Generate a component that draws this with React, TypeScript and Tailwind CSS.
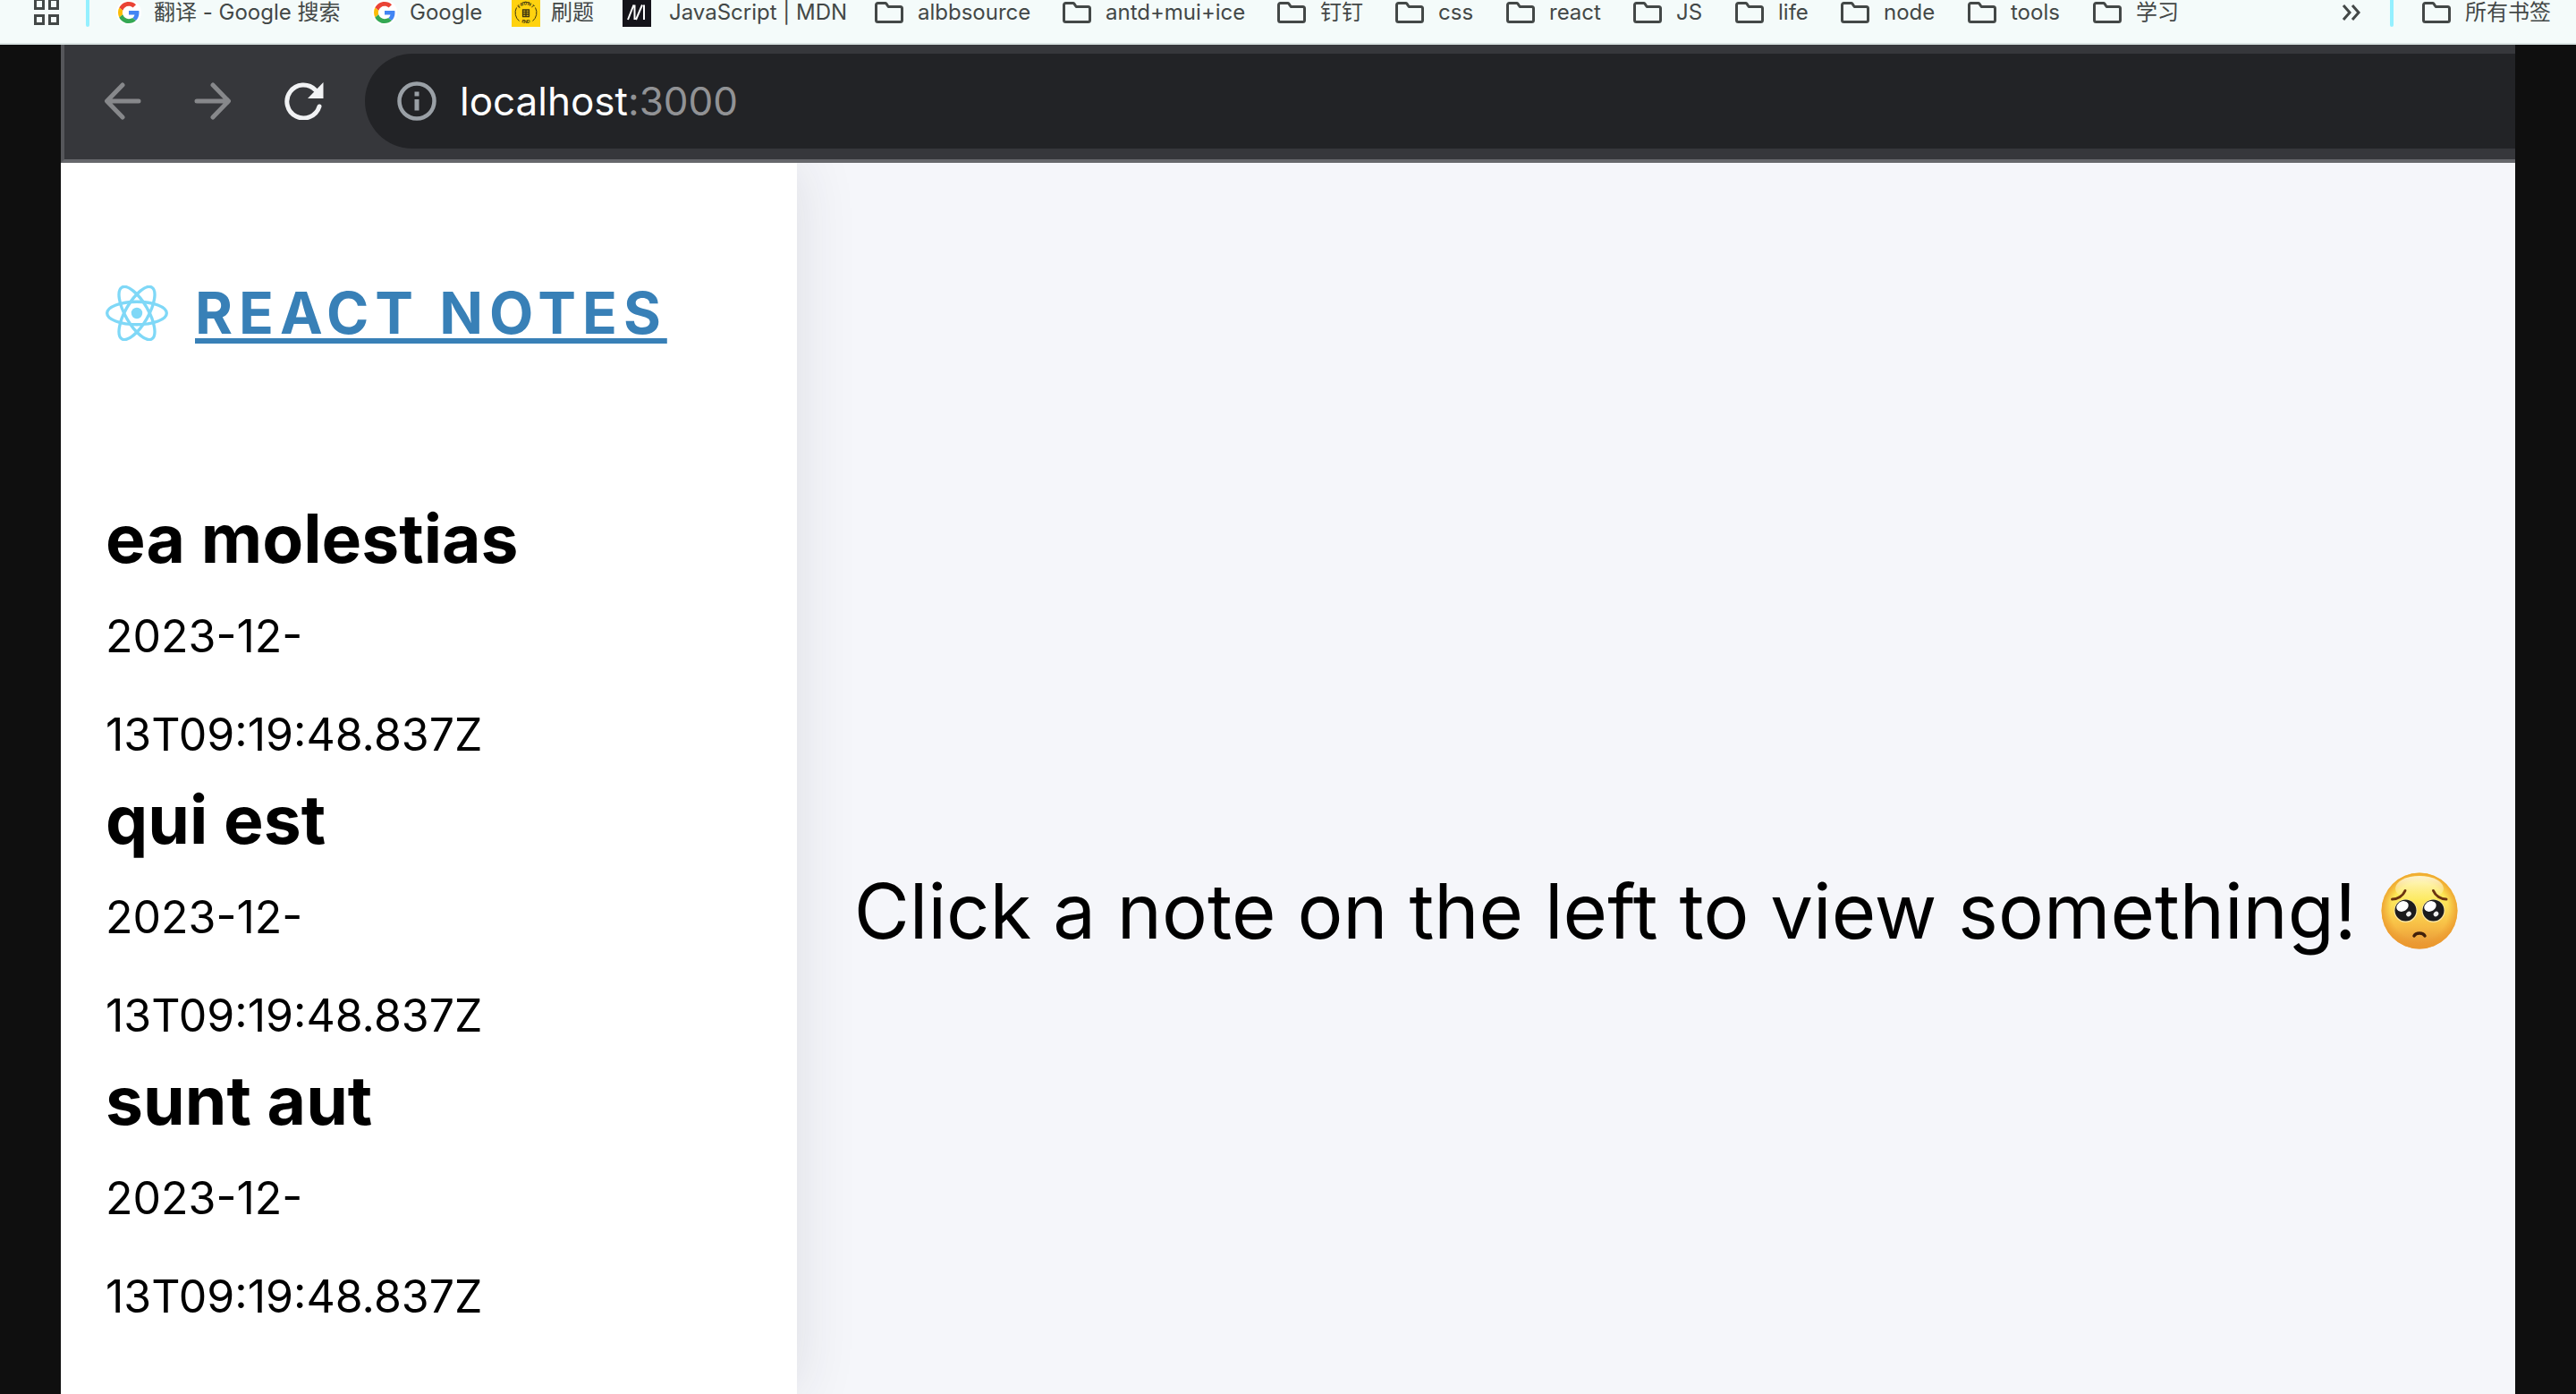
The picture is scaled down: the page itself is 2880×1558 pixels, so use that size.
import type { ReactNode } from "react";

const FolderIcon = () => (
  <svg viewBox="0 0 32 24" className="h-6 w-8 shrink-0" fill="none" stroke="#434847" strokeWidth="3" strokeLinejoin="round" aria-hidden="true">
    <path d="M1.5 3.5a2 2 0 0 1 2-2h8.2a1.500 1.500 0 0 1 1.200.6L15.200 5.500H28.500a2 2 0 0 1 2 2V20.500a2 2 0 0 1-2 2H3.500a2 2 0 0 1-2-2z" />
  </svg>
);

const GoogleIcon = () => (
  <span className="flex size-7 shrink-0 items-center justify-center rounded-full bg-white">
    <svg viewBox="0 0 48 48" className="size-6" aria-hidden="true">
      <path fill="#EA4335" d="M24 9.500c3.540 0 6.710 1.220 9.210 3.600l6.850-6.850C35.900 2.380 30.470 0 24 0 14.620 0 6.510 5.380 2.560 13.220l7.980 6.190C12.430 13.720 17.740 9.500 24 9.500z" />
      <path fill="#4285F4" d="M46.980 24.550c0-1.570-.15-3.090-.38-4.550H24v9.020h12.940c-.58 2.960-2.260 5.480-4.780 7.180l7.730 6c4.510-4.180 7.090-10.360 7.090-17.650z" />
      <path fill="#FBBC05" d="M10.530 28.590c-.48-1.450-.76-2.990-.76-4.590s.27-3.140.76-4.590l-7.980-6.190C.92 16.460 0 20.120 0 24c0 3.880.92 7.540 2.560 10.780l7.970-6.190z" />
      <path fill="#34A853" d="M24 48c6.480 0 11.930-2.130 15.890-5.810l-7.730-6c-2.150 1.450-4.920 2.300-8.160 2.300-6.260 0-11.570-4.220-13.470-9.910l-7.980 6.190C6.510 42.620 14.620 48 24 48z" />
    </svg>
  </span>
);

const QuizIcon = () => (
  <svg viewBox="0 0 32 32" className="size-8 shrink-0" aria-hidden="true">
    <defs>
      <path id="badge-top" d="M7.500 16a8.500 8.500 0 0 1 17 0" />
      <path id="badge-bottom" d="M4 16a12 12 0 0 0 24 0" />
    </defs>
    <rect width="32" height="32" fill="#ffd20f" />
    <path d="M5.500 10.500a12 12 0 0 0 3 15M26.500 10.500a12 12 0 0 1-3 15M12 5a12 12 0 0 1 8 0" fill="none" stroke="#3d3510" strokeWidth="1" />
    <g fill="#3d3510" fontSize="5" fontWeight="700" textAnchor="middle">
      <text>
        <textPath href="#badge-top" startOffset="50%">FRONT</textPath>
      </text>
      <text>
        <textPath href="#badge-bottom" startOffset="50%">END</textPath>
      </text>
    </g>
    <path d="M12 13h8M12 15.500h8M12 18h8M12 20.500h8M12.500 12.500v8M16 12.500v8M19.500 12.500v8" stroke="#3d3510" strokeWidth="1.300" fill="none" />
  </svg>
);

const MdnIcon = () => (
  <svg viewBox="0 0 32 32" className="size-8 shrink-0" aria-hidden="true">
    <rect width="32" height="32" fill="#15141a" />
    <path d="M6 24 12.500 7.500M15 24 22 7.500M13.500 7.500V24M24 7.500V24" stroke="#fff" strokeWidth="2" fill="none" />
  </svg>
);

type Bookmark = { label: string; icon: ReactNode; width: string; gap?: string };

const bookmarks: Bookmark[] = [
  { label: "翻译 - Google 搜索", icon: <GoogleIcon />, width: "w-[286px]", gap: "gap-3.5" },
  { label: "Google", icon: <GoogleIcon />, width: "w-[156px]", gap: "gap-3.5" },
  { label: "刷题", icon: <QuizIcon />, width: "w-[124px]", gap: "gap-3" },
  { label: "JavaScript | MDN", icon: <MdnIcon />, width: "w-[282px]", gap: "gap-5" },
  { label: "albbsource", icon: <FolderIcon />, width: "w-[210px]" },
  { label: "antd+mui+ice", icon: <FolderIcon />, width: "w-[240px]" },
  { label: "钉钉", icon: <FolderIcon />, width: "w-[132px]" },
  { label: "css", icon: <FolderIcon />, width: "w-[124px]" },
  { label: "react", icon: <FolderIcon />, width: "w-[142px]" },
  { label: "JS", icon: <FolderIcon />, width: "w-[114px]" },
  { label: "life", icon: <FolderIcon />, width: "w-[118px]" },
  { label: "node", icon: <FolderIcon />, width: "w-[142px]" },
  { label: "tools", icon: <FolderIcon />, width: "w-[140px]" },
  { label: "学习", icon: <FolderIcon />, width: "w-[132px]" },
];

const BookmarkBar = () => (
  <nav aria-label="书签" className="flex h-[50px] items-start overflow-hidden border-b-2 border-[#dbe5e4] bg-[#f4fbfa] pr-7 pl-[38px] text-2xl leading-7 text-[#434847]">
    <button type="button" aria-label="Apps" className="h-7 shrink-0">
      <svg viewBox="0 0 28 28" className="size-7" fill="none" stroke="#434847" strokeWidth="3" aria-hidden="true">
        <path d="M1.500-.5h9v10h-9zM17.500-.5h9v10h-9zM1.500 17.500h9v9h-9zM17.500 17.500h9v9h-9z" />
      </svg>
    </button>
    <span className="mr-[30px] ml-[30px] h-[30px] w-1 shrink-0 rounded-b bg-[#94f0ff]" />
    {bookmarks.map((b) => (
      <a key={b.label} href="#" className={`flex h-7 shrink-0 items-center whitespace-nowrap ${b.gap ?? "gap-4"} ${b.width}`}>
        {b.icon}
        <span>{b.label}</span>
      </a>
    ))}
    <button type="button" aria-label="More bookmarks" className="ml-auto h-7 shrink-0">
      <svg viewBox="0 0 22 28" className="h-7 w-[22px]" fill="none" stroke="#434847" strokeWidth="3" aria-hidden="true">
        <path d="M2 6l7 8-7 8M12 6l7 8-7 8" />
      </svg>
    </button>
    <span className="mr-8 ml-8 h-[30px] w-1 shrink-0 rounded-b bg-[#94f0ff]" />
    <a href="#" className="flex h-7 shrink-0 items-center gap-4 whitespace-nowrap">
      <FolderIcon />
      <span>所有书签</span>
    </a>
  </nav>
);

const Toolbar = () => (
  <header className="flex h-[132px] items-start border-b-4 border-l-4 border-b-[#66676b] border-l-[#55565a] bg-[#36373b] pt-[10px]">
    <div className="flex h-[106px] w-[336px] shrink-0 items-center gap-[59px] pl-11">
      <button type="button" aria-label="Back">
        <svg viewBox="0 0 42 42" className="size-[42px]" fill="none" stroke="#87888b" strokeWidth="5" strokeLinecap="round" strokeLinejoin="round" aria-hidden="true">
          <path d="M39 21H4M21 3 3.500 21l17.500 18" />
        </svg>
      </button>
      <button type="button" aria-label="Forward">
        <svg viewBox="0 0 42 42" className="size-[42px]" fill="none" stroke="#87888b" strokeWidth="5" strokeLinecap="round" strokeLinejoin="round" aria-hidden="true">
          <path d="M3 21h35M21 3l17.500 18-17.500 18" />
        </svg>
      </button>
      <button type="button" aria-label="Reload">
        <svg viewBox="0 0 44 42" className="h-[42px] w-11" fill="none" strokeLinecap="round" aria-hidden="true">
          <path d="M39 27A18.500 18.500 0 1 1 34.500 8.500" stroke="#f1f2f4" strokeWidth="5" />
          <path d="M43.500 0v18H26z" fill="#f1f2f4" />
        </svg>
      </button>
    </div>
    <button type="button" className="flex h-[106px] grow items-center gap-[26px] rounded-l-full bg-[#222326] pl-9 text-left text-[44px] leading-none text-[#919295]">
      <svg viewBox="0 0 44 44" className="size-11" fill="none" stroke="#9aa0a6" strokeWidth="5" aria-hidden="true">
        <circle cx="22" cy="22" r="19.500" strokeWidth="4.500" />
        <path d="M22 20v12.500M22 11.500v5" />
      </svg>
      <span>
        <span className="text-white">localhost</span>:3000
      </span>
    </button>
  </header>
);

const ReactLogo = () => (
  <svg viewBox="-11.500 -10.232 23 20.463" className="h-[62px] w-[70px] shrink-0" aria-hidden="true">
    <circle r="2.050" fill="#7fd8f7" />
    <g stroke="#7fd8f7" strokeWidth="1.100" fill="none">
      <ellipse rx="11" ry="4.200" />
      <ellipse rx="11" ry="4.200" transform="rotate(60)" />
      <ellipse rx="11" ry="4.200" transform="rotate(120)" />
    </g>
  </svg>
);

const PleadingFace = () => (
  <svg viewBox="0 0 86 86" className="size-[86px] shrink-0" role="img" aria-label="pleading face">
    <defs>
      <linearGradient id="face" x1="0" y1="0" x2="0" y2="1">
        <stop offset="0" stopColor="#fde23c" />
        <stop offset=".35" stopColor="#fde95c" />
        <stop offset=".7" stopColor="#f7bd45" />
        <stop offset="1" stopColor="#e58f34" />
      </linearGradient>
      <radialGradient id="rim" cx=".5" cy=".5" r=".5">
        <stop offset=".75" stopColor="#ec9a2d" stopOpacity="0" />
        <stop offset="1" stopColor="#ec9a2d" stopOpacity=".85" />
      </radialGradient>
      <linearGradient id="shine" x1="0" y1="0" x2="0" y2="1">
        <stop offset="0" stopColor="#fffbe0" stopOpacity=".9" />
        <stop offset="1" stopColor="#fffbe0" stopOpacity="0" />
      </linearGradient>
    </defs>
    <circle cx="43" cy="43" r="42.500" fill="url(#face)" />
    <circle cx="43" cy="43" r="42.500" fill="url(#rim)" />
    <ellipse cx="43" cy="18" rx="27" ry="14" fill="url(#shine)" />
    <g fill="none" stroke="#6b3410" strokeWidth="3" strokeLinecap="round">
      <path d="M12.500 30c6 0 12-3.500 14.500-9.500M73 30c-6 0-12-3.500-14.500-9.500" />
      <path d="M37 71c2-4 10-4 12 0" stroke="#41200c" strokeWidth="3.500" />
    </g>
    <g>
      <circle cx="27.500" cy="43" r="13" fill="#fff3c4" opacity=".7" />
      <circle cx="58.500" cy="43" r="13" fill="#fff3c4" opacity=".7" />
      <circle cx="27.500" cy="42.500" r="12" fill="#1b1b1d" />
      <circle cx="58.500" cy="42.500" r="12" fill="#1b1b1d" />
      <ellipse cx="24" cy="38" rx="7" ry="5.500" fill="#fff" transform="rotate(-30 24 38)" />
      <ellipse cx="55" cy="38" rx="7" ry="5.500" fill="#fff" transform="rotate(-30 55 38)" />
      <ellipse cx="31" cy="46.500" rx="3" ry="2.500" fill="#eee" transform="rotate(-40 31 46.500)" />
      <ellipse cx="61.500" cy="46.500" rx="3" ry="2.500" fill="#eee" transform="rotate(-40 61.500 46.500)" />
    </g>
  </svg>
);

const notes = [
  { title: "ea molestias", updated: "2023-12-13T09:19:48.837Z" },
  { title: "qui est", updated: "2023-12-13T09:19:48.837Z" },
  { title: "sunt aut", updated: "2023-12-13T09:19:48.837Z" },
];

const Sidebar = () => (
  <aside className="z-10 w-[30%] shrink-0 bg-white px-[50px] pt-[118px] shadow-[0_0_64px_rgba(40,45,55,0.12)]">
    <div className="flex h-[100px] items-center gap-[30px]">
      <ReactLogo />
      <a href="#" className="text-[64px] leading-none font-bold tracking-[7px] whitespace-nowrap text-[#3880b7] underline decoration-[6px] underline-offset-[5px]">
        REACT NOTES
      </a>
    </div>
    <ul className="mt-[162px]">
      {notes.map((n) => (
        <li key={n.title} className="text-black">
          <h2 className="pb-3.5 text-[75px] leading-[80px] font-bold">{n.title}</h2>
          <time dateTime={n.updated} className="block w-[450px] text-[50px] leading-[110px]">
            {n.updated}
          </time>
        </li>
      ))}
    </ul>
  </aside>
);

export default function App() {
  return (
    <div className="flex min-h-screen flex-col overflow-hidden bg-[#0f0f0f] font-['Inter','Noto_Sans_CJK_SC',sans-serif]">
      <BookmarkBar />
      <div className="mx-[68px] flex grow flex-col bg-[#f5f6fa]">
        <Toolbar />
        <div className="flex grow overflow-hidden">
          <Sidebar />
          <main className="flex grow justify-center pt-[776px]">
            <p className="flex h-[120px] items-center gap-7 text-[85px] leading-none whitespace-nowrap text-black">
              <span>Click a note on the left to view something!</span>
              <PleadingFace />
            </p>
          </main>
        </div>
      </div>
    </div>
  );
}
